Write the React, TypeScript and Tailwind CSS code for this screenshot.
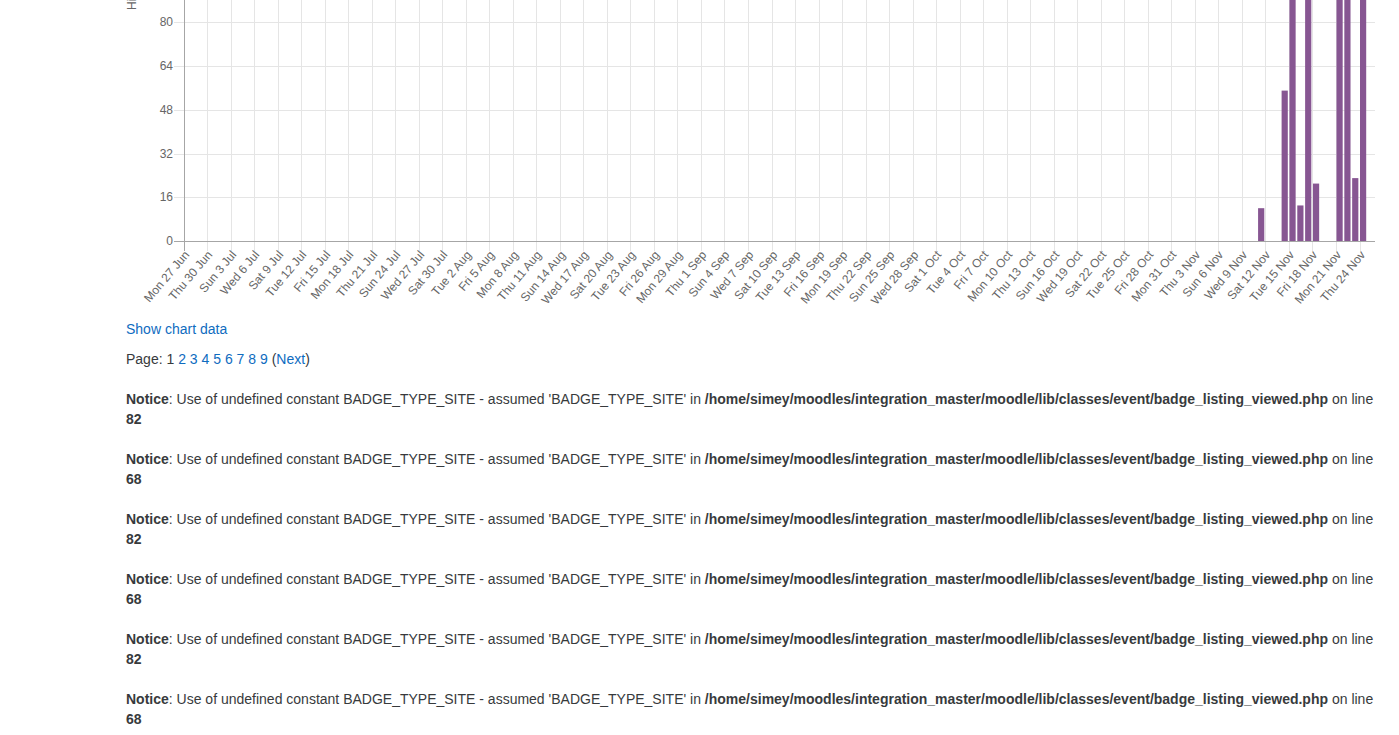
import React from "react";

const DAYS = ["Sun", "Mon", "Tue", "Wed", "Thu", "Fri", "Sat"];
const MONTHS = ["Jan", "Feb", "Mar", "Apr", "May", "Jun", "Jul", "Aug", "Sep", "Oct", "Nov", "Dec"];

const labels: string[] = [];
for (let k = 0; k <= 50; k++) {
  const d = new Date(2016, 5, 27 + 3 * k);
  labels.push(`${DAYS[d.getDay()]} ${d.getDate()} ${MONTHS[d.getMonth()]}`);
}

const bars: [number, number][] = [
  [137, 12],
  [140, 55],
  [141, 140],
  [142, 13],
  [143, 140],
  [144, 21],
  [147, 140],
  [148, 140],
  [149, 23],
  [150, 140],
];

const X0 = 184;
const Y0 = 241;
const YSTEP = 43.75; // per 16 hits
const XRIGHT = 1375;
const GSTEP = 23.52;
const BSTEP = 7.84;

function Chart() {
  const yTicks = [0, 16, 32, 48, 64, 80];
  return (
    <svg width={1250} height={319} className="block">
      <g transform="translate(-126,0)" fontFamily="'Liberation Sans', Arial, sans-serif" fontSize={12} fill="#666">
        {yTicks.map((v, i) => {
          const y = Math.round(Y0 - i * YSTEP) + 0.5;
          return (
            <g key={v}>
              <line x1={174} x2={XRIGHT} y1={y} y2={y} stroke={i === 0 ? "#a6a6a6" : "#e5e5e5"} strokeWidth={1} />
              <text x={173} y={y} textAnchor="end" dominantBaseline="middle">
                {v}
              </text>
            </g>
          );
        })}
        {labels.map((l, k) => {
          const x = Math.floor(X0 + k * GSTEP) + 0.5;
          return (
            <g key={l}>
              <line x1={x} x2={x} y1={0} y2={251} stroke={k === 0 ? "#a6a6a6" : "#e5e5e5"} strokeWidth={1} />
              <text
                textAnchor="end"
                dominantBaseline="middle"
                transform={`translate(${x + 3},${253}) rotate(-50)`}
              >
                {l}
              </text>
            </g>
          );
        })}
        <line x1={184.5} x2={184.5} y1={0} y2={251} stroke="#a6a6a6" strokeWidth={1} />
        <line x1={174} x2={XRIGHT} y1={241.5} y2={241.5} stroke="#a6a6a6" strokeWidth={1} />
        {bars.map(([i, v]) => {
          const h = (v * YSTEP) / 16;
          return <rect key={i} x={X0 + i * BSTEP} y={Y0 - h} width={6.2} height={h} fill="#875692" />;
        })}
        <text transform="translate(135.5,10) rotate(-90)" textAnchor="start" fill="#666" fontSize={12}>
          Hits
        </text>
      </g>
    </svg>
  );
}

function Notice({ line }: { line: number }) {
  return (
    <div className="mt-[20px]">
      <b className="font-bold">Notice</b>: Use of undefined constant BADGE_TYPE_SITE - assumed 'BADGE_TYPE_SITE' in{" "}
      <b className="font-bold">/home/simey/moodles/integration_master/moodle/lib/classes/event/badge_listing_viewed.php</b> on
      line <b className="font-bold">{line}</b>
    </div>
  );
}

export default function App() {
  const link = "text-[#0f6cbf] no-underline";
  return (
    <div className="bg-white min-h-[735px] w-[1399px] overflow-hidden">
      <div
        className="ml-[126px] w-[1250px] text-[14px] leading-[20px] text-[#373a3c]"
        style={{ fontFamily: "'Liberation Sans', Arial, sans-serif" }}
      >
        <Chart />
        <div>
          <a className={link} href="#">
            Show chart data
          </a>
        </div>
        <div className="mt-[10px]">
          Page: 1{" "}
          {[2, 3, 4, 5, 6, 7, 8, 9].map((n) => (
            <React.Fragment key={n}>
              <a className={link} href="#">
                {n}
              </a>{" "}
            </React.Fragment>
          ))}
          (<a className={link} href="#">Next</a>)
        </div>
        {[82, 68, 82, 68, 82, 68].map((l, i) => (
          <Notice key={i} line={l} />
        ))}
      </div>
    </div>
  );
}
